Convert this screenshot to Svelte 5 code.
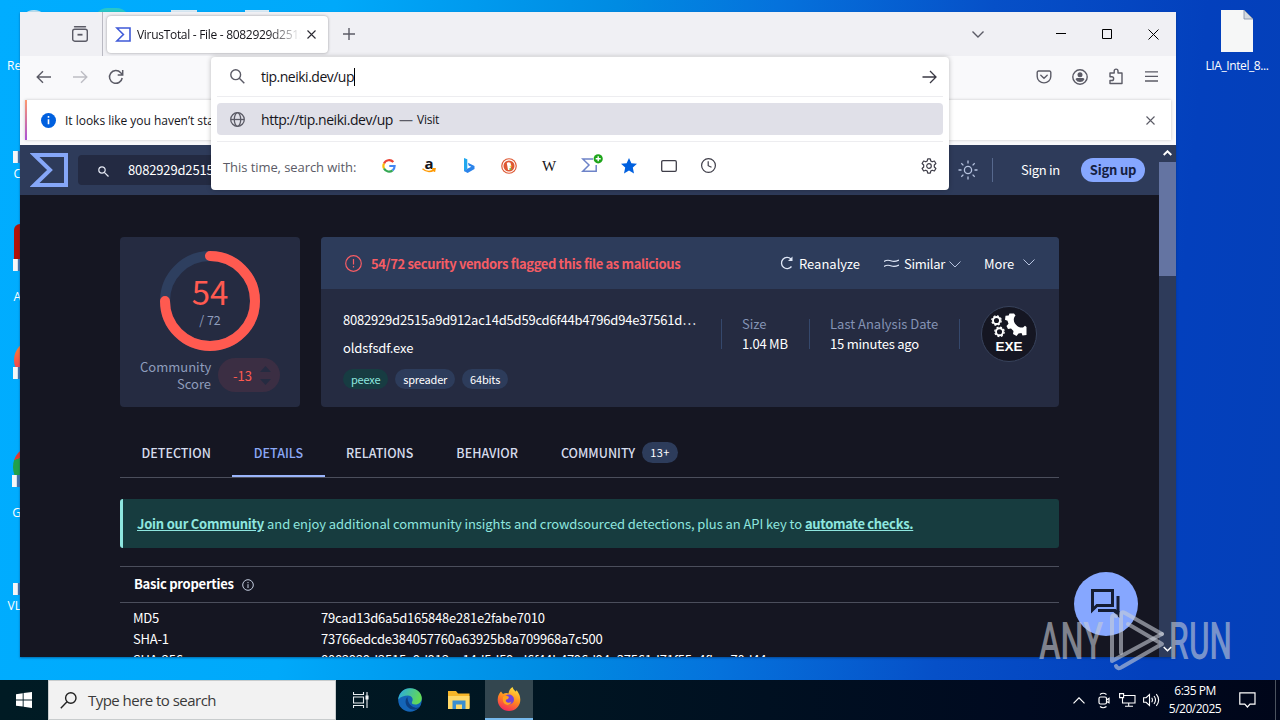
<script>
  const shortcuts = [
    { label: 'Re', kind: 'bin', top: 10, labelTop: 59, arrow: false },
    { label: 'C', kind: 'plain', top: 116, labelTop: 167, arrow: true },
    { label: 'A', kind: 'acrobat', top: 224, labelTop: 290, arrow: true },
    { label: '', kind: 'fox', top: 341, labelTop: 390, arrow: true },
    { label: 'G', kind: 'chrome', top: 447, labelTop: 506, arrow: true },
    { label: 'VL', kind: 'plain', top: 548, labelTop: 599, arrow: true }
  ];

  const tabs = ['DETECTION', 'DETAILS', 'RELATIONS', 'BEHAVIOR', 'COMMUNITY'];
  let active = 'DETAILS';

  const tags = ['peexe', 'spreader', '64bits'];

  const properties = [
    { name: 'MD5', value: '79cad13d6a5d165848e281e2fabe7010' },
    { name: 'SHA-1', value: '73766edcde384057760a63925b8a709968a7c500' },
    { name: 'SHA-256', value: '8082929d2515a9d912ac14d5d59cd6f44b4796d94e37561d71f55c4fbec70d44' }
  ];

  let query = 'tip.neiki.dev/up';
</script>

<div class="desktop">
  <div class="workspace">
    {#each shortcuts as s}
      <div class="shortcut {s.kind}" style="top: {s.top}px">
        {#if s.arrow}<span class="arrow"></span>{/if}
      </div>
      <span class="shortcut-label" style="top: {s.labelTop}px">{s.label}</span>
    {/each}
    <span class="peek round"></span>
    <span class="peek sheet"></span>
    <span class="peek sheet second"></span>

    <div class="file">
      <svg width="32" height="42" viewBox="0 0 32 42">
        <path d="M0 0h23l9 9v33H0z" fill="#f6f7f7" />
        <path d="M23 0v9h9z" fill="#d5dae0" stroke="#7d8ba3" stroke-width=".8" />
      </svg>
      <span>LIA_Intel_8...</span>
    </div>

    <div class="window">
      <div class="tabstrip">
        <div class="view-button">
          <svg width="18" height="18" viewBox="0 0 18 18" fill="none" stroke="#5b5b66" stroke-width="1.4">
            <path d="M3.5 1.7h11" stroke-linecap="round" />
            <rect x="1.7" y="4.2" width="14.6" height="12" rx="2" />
            <path d="M6.500 9.700h5" stroke-width="1.8" />
          </svg>
        </div>
        <div class="tab">
          <svg width="16" height="15" viewBox="0 0 16 15" fill="none" stroke="#3f5ad8" stroke-width="1.6">
            <path d="M1.800 1h13.200v13H1.800l6.600-6.500z" />
          </svg>
          <span class="tab-title">VirusTotal - File - 8082929d2515a</span>
          <svg class="tab-close" width="9" height="9" viewBox="0 0 9 9" stroke="#2b2a33" stroke-width="1.1">
            <path d="M.5.5l8 8M8.500.5l-8 8" />
          </svg>
        </div>
        <svg class="new-tab" width="12" height="12" viewBox="0 0 12 12" stroke="#5b5b66" stroke-width="1.4">
          <path d="M6 0v12M0 6h12" />
        </svg>
        <div class="captions">
          <svg width="12" height="7" viewBox="0 0 12 7" fill="none" stroke="#5b5b66" stroke-width="1.4"><path d="M.5.5L6 6 11.500.5" /></svg>
          <svg width="10" height="10" viewBox="0 0 10 10" stroke="#000"><path d="M0 4.500h10" /></svg>
          <svg width="10" height="10" viewBox="0 0 10 10" fill="none" stroke="#000"><path d="M.5.5h9v9h-9z" /></svg>
          <svg width="11" height="11" viewBox="0 0 11 11" stroke="#000"><path d="M.5.5l10 10M10.500.5l-10 10" /></svg>
        </div>
      </div>

      <div class="navbar">
        <svg width="16" height="14" viewBox="0 0 16 14" fill="none" stroke="#5b5b66" stroke-width="1.4"><path d="M15 7H1.500M7 1.200L1.200 7 7 12.800" /></svg>
        <svg width="16" height="14" viewBox="0 0 16 14" fill="none" stroke="#bdbdc4" stroke-width="1.4"><path d="M1 7h13.500M9 1.200L14.800 7 9 12.800" /></svg>
        <svg width="16" height="16" viewBox="0 0 16 16" fill="none" stroke="#5b5b66" stroke-width="1.5"><path d="M14.200 9A6.400 6.400 0 1 1 12.700 3.700L14.500 5.500M14.700 1v5H9.700" /></svg>
        <div class="tools">
          <svg width="16" height="16" viewBox="0 0 16 16" fill="none" stroke="#5b5b66" stroke-width="1.4" stroke-linecap="round"><path d="M2.500 2h11a1.300 1.300 0 0 1 1.300 1.300V7.500a6.800 6.400 0 0 1-13.600 0V3.300A1.300 1.300 0 0 1 2.500 2zM4.800 6.300L8 9.300l3.200-3" /></svg>
          <svg width="16" height="16" viewBox="0 0 16 16"><circle cx="8" cy="8" r="7.200" fill="none" stroke="#5b5b66" stroke-width="1.4" /><circle cx="8" cy="5.800" r="2.500" fill="#5b5b66" /><path d="M3.600 10.500Q3.600 9 5 9h6q1.400 0 1.400 1.500Q11 13 8 13t-4.400-2.500z" fill="#5b5b66" /></svg>
          <svg width="16" height="17" viewBox="0 0 16 17" fill="none" stroke="#5b5b66" stroke-width="1.4" stroke-linejoin="round"><path d="M2 5h4.200V3a1.900 1.900 0 0 1 3.800 0v2h4v10.500H2v-3h1.800a1.600 1.600 0 0 0 0-3.700H2z" /></svg>
          <svg width="13" height="11" viewBox="0 0 13 11" stroke="#5b5b66" stroke-width="1.3"><path d="M0 .8h13M0 5.400h13M0 10h13" /></svg>
        </div>
      </div>

      <div class="notice">
        <div class="notice-card">
          <svg width="15" height="15" viewBox="0 0 15 15"><circle cx="7.500" cy="7.500" r="7.500" fill="#0060df" /><path d="M7.500 6.300v5M7.500 3v1.800" stroke="#fff" stroke-width="1.600" /></svg>
          <span class="notice-text">It looks like you haven’t started Firefox</span>
          <svg class="dismiss" width="9" height="9" viewBox="0 0 9 9" stroke="#5b5b66" stroke-width="1.100"><path d="M.5.5l8 8M8.500.5l-8 8" /></svg>
        </div>
      </div>

      <div class="viewport">
        <div class="page">
          <header>
            <svg class="vt-logo" width="38" height="34" viewBox="0 0 38 34" fill="none" stroke="#86a7f8" stroke-width="4"><path d="M4.500 2H36v30H4.500L20 17z" /></svg>
            <div class="vt-search">
              <svg width="11" height="11" viewBox="0 0 11 11" fill="none" stroke="#e6eaf5" stroke-width="1.200"><circle cx="4" cy="4" r="3.200" /><path d="M6.300 6.300l4.200 4.200" /></svg>
              <span>8082929d2515a9d912ac</span>
            </div>
            <svg class="sun" width="20" height="20" viewBox="0 0 20 20" fill="none" stroke="#b6c3df" stroke-width="1.300">
              <circle cx="10" cy="10" r="3.600" />
              <path d="M10 .5v3M10 16.500v3M.5 10h3M16.500 10h3M3.300 3.300l2.100 2.100M14.600 14.600l2.100 2.100M3.300 16.700l2.100-2.100M14.600 5.400l2.100-2.100" />
            </svg>
            <span class="divider"></span>
            <a class="sign-in" href="#in">Sign in</a>
            <a class="sign-up" href="#up">Sign up</a>
          </header>

          <main>
            <section class="summary">
              <div class="score-card">
                <div class="ring">
                  <svg width="100" height="100" viewBox="0 0 100 100" fill="none" stroke-width="10">
                    <circle cx="50" cy="50" r="45" stroke="#2e3f5f" />
                    <path d="M50 5A45 45 0 1 1 5 50" stroke="#ff5a50" stroke-linecap="round" />
                  </svg>
                  <div class="ring-text">
                    <span class="hits">54</span>
                    <span class="total">/ 72</span>
                  </div>
                </div>
                <div class="community">
                  <span class="community-label">Community<br />Score</span>
                  <div class="votes">
                    <span>-13</span>
                    <svg width="11" height="19" viewBox="0 0 11 19" fill="#252b41"><path d="M0 6l5.500-6L11 6zM0 13h11l-5.500 6z" /></svg>
                  </div>
                </div>
              </div>

              <div class="file-card">
                <div class="file-head">
                  <svg width="17" height="17" viewBox="0 0 17 17" fill="none" stroke="#f65c64" stroke-width="1.200"><circle cx="8.500" cy="8.500" r="7.800" /><path d="M8.500 4v5.500M8.500 11v1.500" /></svg>
                  <strong>54/72 security vendors flagged this file as malicious</strong>
                  <div class="actions">
                    <svg width="13" height="14" viewBox="0 0 13 14" fill="none" stroke="#dfe7f7" stroke-width="1.300"><path d="M11.500 10.500A5.600 5.600 0 1 1 11 3" /><path d="M12.500.5v4.500H8z" fill="#dfe7f7" stroke="none" /></svg>
                    <span class="reanalyze">Reanalyze</span>
                    <svg class="waves" width="15" height="9" viewBox="0 0 15 9" fill="none" stroke="#dfe7f7" stroke-width="1.200"><path d="M0 2.500C3 .5 5 1 7.500 2S12 2.500 15 1M0 7.500C3 5.500 5 6 7.500 7s4.500.5 7.500-1" /></svg>
                    <span class="similar">Similar</span>
                    <svg class="caret" width="12" height="7" viewBox="0 0 12 7" fill="none" stroke="#b6c3df"><path d="M.5.5L6 6 11.500.5" /></svg>
                    <span class="more">More</span>
                    <svg class="caret wide" width="12" height="7" viewBox="0 0 12 7" fill="none" stroke="#b6c3df"><path d="M.5.5L6 6 11.500.5" /></svg>
                  </div>
                </div>
                <div class="file-body">
                  <div class="identity">
                    <div class="hash">8082929d2515a9d912ac14d5d59cd6f44b4796d94e37561d…</div>
                    <div class="name">oldsfsdf.exe</div>
                    <div class="tags">
                      {#each tags as tag}
                        <span class="tag {tag}">{tag}</span>
                      {/each}
                    </div>
                  </div>
                  <div class="fact size">
                    <span>Size</span>
                    <b>1.04 MB</b>
                  </div>
                  <div class="fact date">
                    <span>Last Analysis Date</span>
                    <b>15 minutes ago</b>
                  </div>
                  <div class="fact type"></div>
                  <div class="exe">
                    <svg width="36" height="26" viewBox="0 0 36 26" fill="none" stroke="#fff">
                      <circle cx="5.500" cy="7.500" r="3.500" stroke-width="1.900" />
                      <circle cx="5.500" cy="7.500" r="4.700" stroke-width="1.300" stroke-dasharray="2 1.690" />
                      <circle cx="8.500" cy="18.800" r="3.500" stroke-width="1.900" />
                      <circle cx="8.500" cy="18.800" r="4.700" stroke-width="1.300" stroke-dasharray="2 1.690" />
                      <path d="M18.500.5h4.500l1.500 2c-4.500 5 .5 12.500 7.500 12l2-1.800 1.500 1.300v8l-4 .5-1-2.500-3 .5-2 2.500-3.500-2 .5-3-2.500-2.500-3 .5-1.500-3 2-2.300-1-3-2.500-1 .5-4 3.200-.3z" fill="#fff" stroke="none" />
                    </svg>
                    <span>EXE</span>
                  </div>
                </div>
              </div>
            </section>

            <nav>
              {#each tabs as tab}
                <button class:active={tab === active} on:click={() => (active = tab)}>
                  <span class="tab-name">{tab}</span>
                  {#if tab === 'COMMUNITY'}<span class="badge">13+</span>{/if}
                </button>
              {/each}
            </nav>

            <div class="banner">
              <a class="join" href="#join">Join our Community</a>
              <span class="pitch">and enjoy additional community insights and crowdsourced detections, plus an API key to</span>
              <a class="auto" href="#api">automate checks.</a>
            </div>

            <div class="properties">
              <div class="properties-head">
                <h2>Basic properties</h2>
                <svg width="12" height="12" viewBox="0 0 12 12" fill="none" stroke="#c5cee0"><circle cx="6" cy="6" r="5.300" /><path d="M6 5.200v3.800M6 3v1.200" /></svg>
              </div>
              {#each properties as p}
                <div class="row">
                  <span class="key">{p.name}</span>
                  <span class="value">{p.value}</span>
                </div>
              {/each}
            </div>
          </main>

          <div class="chat">
            <svg width="30" height="30" viewBox="0 0 30 30" fill="none" stroke="#151d33" stroke-width="3"><path d="M1.500 21V1.500h20v15H6z" /><path d="M27 7v18l-3-3.500H7" /><path d="M28.500 22v7l-6-6z" fill="#151d33" stroke="none" /></svg>
          </div>
        </div>
        <div class="scrollbar">
          <svg width="9" height="6" viewBox="0 0 9 6" fill="none" stroke="#fff" stroke-width="2"><path d="M.7 5L4.500 1.300 8.300 5" /></svg>
          <div class="thumb"></div>
          <svg width="9" height="6" viewBox="0 0 9 6" fill="none" stroke="#fff" stroke-width="1.600"><path d="M.7 1L4.500 4.700 8.300 1" /></svg>
        </div>
      </div>

      <div class="urlbar">
        <div class="url-row">
          <svg width="15" height="15" viewBox="0 0 15 15" fill="none" stroke="#5b5b66" stroke-width="1.400"><circle cx="5.700" cy="5.700" r="4.900" /><path d="M9.300 9.300l5 5" /></svg>
          <span class="typed">{query}</span><i class="cursor"></i>
          <svg class="go" width="15" height="14" viewBox="0 0 15 14" fill="none" stroke="#3a3944" stroke-width="1.300"><path d="M.5 7H14M8 1l6 6-6 6" /></svg>
        </div>
        <div class="suggestion">
          <svg width="15" height="15" viewBox="0 0 15 15" fill="none" stroke="#5b5b66" stroke-width="1.300"><circle cx="7.500" cy="7.500" r="6.800" /><ellipse cx="7.500" cy="7.500" rx="3.200" ry="6.800" /><path d="M1 7.500h13" /></svg>
          <span class="address">http://{query}</span>
          <span class="dash">—</span>
          <span class="visit">Visit</span>
        </div>
        <div class="engines">
          <span class="engines-label">This time, search with:</span>
          <div class="engine">
            <svg width="14" height="14" viewBox="0 0 14 14" fill="none" stroke-width="2.200"><path d="M11.300 3A5.600 5.600 0 0 0 2 4.500" stroke="#ea4335" /><path d="M2 4.500a5.600 5.600 0 0 0 0 5" stroke="#fbbc05" /><path d="M2 9.500A5.600 5.600 0 0 0 10.600 11.300" stroke="#34a853" /><path d="M10.600 11.300A5.600 5.600 0 0 0 12.600 7H7.300" stroke="#4285f4" /></svg>
          </div>
          <div class="engine amazon">
            <span>a</span>
            <svg width="14" height="5" viewBox="0 0 14 5" fill="none" stroke="#f90" stroke-width="1.500"><path d="M.5.8Q6 5.500 12 2M10 .8l3 0-.6 3" /></svg>
          </div>
          <div class="engine">
            <svg width="11" height="16" viewBox="0 0 11 16"><path d="M0 0l3.300 1.300v9.500L0 13.500z" fill="#21a8ee" /><path d="M0 13l3.300-2.200 4-2L4.600 7.500 4 4.800l6.500 3.200v3L3.600 15z" fill="#2b83ea" /></svg>
          </div>
          <div class="engine">
            <svg width="16" height="16" viewBox="0 0 16 16"><circle cx="8" cy="8" r="7.800" fill="#de5833" /><circle cx="8" cy="8" r="6.100" fill="none" stroke="#fff" stroke-width="1.100" /><path d="M5.800 5Q7.500 3.500 9.500 4.800L10.200 8 9 12H7z" fill="#fff" /><path d="M8.200 8l3-.6-1.300 1.600z" fill="#fdd20a" /><path d="M8.300 10.300h2.200v1.500H8.300z" fill="#65bc46" /></svg>
          </div>
          <div class="engine wiki">W</div>
          <div class="engine vt">
            <svg width="22" height="20" viewBox="0 0 22 20" fill="none"><path d="M12 5H1.800L8 11 1.800 17.200H15.200V11" stroke="#6d83c8" stroke-width="1.500" /><circle cx="17.200" cy="4.800" r="4.600" fill="#1ea51a" /><path d="M17.200 2.300v5M14.700 4.800h5" stroke="#fff" stroke-width="1.400" /></svg>
          </div>
          <div class="engine">
            <svg width="16" height="16" viewBox="0 0 16 16"><path d="M8 0l2.400 5.200 5.600.6-4.200 3.800L13 15.500 8 12.600 3 15.500l1.200-5.900L0 5.800l5.600-.6z" fill="#0060df" /></svg>
          </div>
          <div class="engine">
            <svg width="16" height="12" viewBox="0 0 16 12" fill="none" stroke="#3f3e49" stroke-width="1.300"><rect x=".7" y=".7" width="14.600" height="10.600" rx="1.200" /></svg>
          </div>
          <div class="engine">
            <svg width="16" height="16" viewBox="0 0 16 16" fill="none" stroke="#3f3e49" stroke-width="1.200"><circle cx="7.500" cy="7.500" r="6.900" /><path d="M7.200 3.200v4.500l3.300 1.600" /></svg>
          </div>
          <svg class="gear" width="16" height="16" viewBox="0 0 16 16" fill="none" stroke="#3f3e49" stroke-width="1.200" stroke-linejoin="round"><circle cx="8" cy="8" r="2.300" /><path d="M6.700.8h2.600l.5 2.200 1.400.8 2.200-.8 1.500 2.500-1.600 1.500v2l1.600 1.500-1.500 2.500-2.200-.8-1.400.8-.5 2.200H6.700L6.200 13l-1.400-.8-2.200.8-1.500-2.500L2.700 9V7L1.100 5.500 2.600 3l2.200.8L6.200 3z" /></svg>
        </div>
      </div>
    </div>
  </div>

  <div class="taskbar">
    <div class="start">
      <svg width="16" height="16" viewBox="0 0 16 16" fill="#fff"><path d="M0 2.200l6.700-.9v6.200H0zM7.600 1.100L16 0v7.500H7.600zM0 8.400h6.700v6.200L0 13.700zM7.600 8.400H16V16l-8.400-1.200z" /></svg>
    </div>
    <div class="task-search">
      <svg width="17" height="17" viewBox="0 0 17 17" fill="none" stroke="#222" stroke-width="1.400"><circle cx="10.800" cy="6" r="5.200" /><path d="M7 9.800L.8 16.200" /></svg>
      <span>Type here to search</span>
    </div>
    <div class="task-app first">
      <svg width="16" height="16" viewBox="0 0 16 16" fill="none" stroke="#e8edf0" stroke-width="1.100"><path d="M.5 0v2.500h10V0M.5 16v-2.500h10V16M.5 5h10v6H.5zM14 0v16" /><path d="M13 4h2v3h-2z" fill="#fff" /></svg>
    </div>
    <div class="task-app">
      <svg width="24" height="24" viewBox="0 0 24 24">
        <defs>
          <linearGradient id="edgeTop" x1="0" y1="0" x2="1" y2=".3"><stop offset="0" stop-color="#28a9e6" /><stop offset="1" stop-color="#62d957" /></linearGradient>
        </defs>
        <circle cx="12" cy="12" r="11.800" fill="#1465b8" />
        <path d="M.3 11.500C1 4.500 6 .2 12 .2c7 0 11.800 5 11.800 9.800 0 4-3 6.500-6.500 6.500-3 0-4-1.300-3.300-2.500 2-3.500-.5-6.500-4-6.500-4 0-7 1-9.700 4z" fill="url(#edgeTop)" />
        <path d="M9.500 9C6 12 7 20 14.500 21.500c3 .5 5.500-.5 7.500-2.500-2.500 1-5.500 1-8-.8C10.500 15.800 9.500 12 9.500 9z" fill="#0c3f82" />
      </svg>
    </div>
    <div class="task-app folder">
      <svg width="22" height="20" viewBox="0 0 22 20"><path d="M0 1h8l2 2.500h11.500V18H0z" fill="#f6b629" /><path d="M0 6h21.500v13H0z" fill="#ffd969" /><path d="M4.500 19v-8.500h13V19H14v-4.500H8V19z" fill="#3b8ed0" /></svg>
    </div>
    <div class="task-app running">
      <svg width="24" height="24" viewBox="0 0 24 24">
        <defs>
          <linearGradient id="flame" x1=".7" y1="0" x2=".3" y2="1"><stop offset="0" stop-color="#ffe03d" /><stop offset=".5" stop-color="#ff8a1e" /><stop offset="1" stop-color="#f5255e" /></linearGradient>
        </defs>
        <path d="M4 4.500L6 7q1.500-1 3.500-1l2 .5Q12 2 15.500 0q.5 2.500 3 4.500 1-.5 1-1.500 4 5 3.800 10A11.300 11 0 0 1 .7 13Q.5 8 4 4.500z" fill="url(#flame)" />
        <circle cx="12" cy="12.500" r="5" fill="#7442d8" />
        <path d="M6 10q3-2.500 6 0l-1 2q-3 .5-2 2.500 2.500 2.500 5.500 0Q13 19 9 17.500T6 10z" fill="#ffa21e" />
      </svg>
    </div>
    <div class="tray">
      <svg class="up" width="12" height="7" viewBox="0 0 12 7" fill="none" stroke="#fff" stroke-width="1.200"><path d="M.5 6.300L6 .8l5.500 5.500" /></svg>
      <svg class="cam" width="12" height="17" viewBox="0 0 12 17" fill="none" stroke="#fff" stroke-width="1.200"><rect x="1" y="5" width="7.500" height="7" rx="1.500" /><path d="M8.500 8l2.500-1.700v4.500L8.500 9.500M2 2.500Q5 0 8.500 2.500M2 14.500q3 2.500 6.500 0" /></svg>
      <svg class="net" width="17" height="14" viewBox="0 0 17 14" fill="none" stroke="#fff" stroke-width="1.100"><path d="M5 2.500h11v7.500H3.500V5M9.700 10v3M6 13.300h8M.6.6h4v4h-4z" /></svg>
      <svg class="vol" width="17" height="14" viewBox="0 0 17 14" fill="none" stroke="#fff" stroke-width="1.100"><path d="M.6 4.700h2.500L6.500 1.500v11L3.100 9.300H.6zM8.700 4.800q1.500 2.200 0 4.400M11 3q3 4 0 8M13.300 1.200q4.700 5.800 0 11.600" /></svg>
      <div class="clock"><span class="time">6:35 PM</span><span class="day">5/20/2025</span></div>
      <svg class="action" width="17" height="17" viewBox="0 0 17 17" fill="none" stroke="#fff" stroke-width="1.200"><path d="M.8.8h15.200v11.400H11L8.400 15l-2.600-2.800h-5z" /></svg>
      <span class="peek-line"></span>
    </div>
  </div>

  <svg class="watermark" width="194" height="64" viewBox="0 0 194 64">
    <text x="1" y="50" font-size="52" textLength="64" lengthAdjust="spacingAndGlyphs">ANY</text>
    <text x="131" y="50" font-size="52" textLength="63" lengthAdjust="spacingAndGlyphs">RUN</text>
    <g fill="none" stroke-width="4" stroke-linejoin="round" stroke-linecap="round">
      <path d="M83 44V6q0-4 4-2l37 21" />
      <path d="M78 7q-4-2-4 2v43l50-27" />
      <path d="M90 15l34 20L84 58q-4 3-6-1" />
    </g>
  </svg>
</div>

<style>
  :global(body) {
    margin: 0;
    overflow: hidden;
  }

  .desktop {
    position: relative;
    width: 1280px;
    height: 720px;
    display: flex;
    flex-direction: column;
    overflow: hidden;
    background: linear-gradient(95deg, #00adff 0%, #00a9fa 25%, #008be2 46%, #0572dc 58%, #0650c8 74%, #0340bd 90%, #0440b8 100%);
    font-family: "Open Sans", "Noto Sans", sans-serif;
  }

  .desktop svg {
    flex: none;
  }

  .workspace {
    position: relative;
    flex: 1;
  }

  .shortcut {
    position: absolute;
    left: 14px;
    width: 36px;
    height: 47px;
  }

  .shortcut.bin {
    left: 20px;
    border-radius: 50%;
    background: #bfe0ef;
    width: 28px;
    height: 26px;
  }

  .shortcut.acrobat {
    border-radius: 6px;
    background: #b11208;
  }

  .shortcut.fox {
    height: 38px;
    border-radius: 50%;
    background: linear-gradient(#ff8a2a, #ec2c62);
  }

  .shortcut.chrome {
    left: 13px;
    height: 40px;
    border-radius: 50%;
    background: linear-gradient(160deg, #e33b2e 25%, #22a04a 26%);
  }

  .arrow {
    position: absolute;
    left: -1px;
    bottom: 0;
    width: 11px;
    height: 12px;
    background: linear-gradient(90deg, #f4f6f8 40%, #4673a9 45%);
  }

  .shortcut-label {
    position: absolute;
    left: 7px;
    width: 14px;
    text-align: right;
    color: #fff;
    font-size: 12px;
    line-height: 14px;
  }

  .peek {
    position: absolute;
    top: 8px;
    left: 95px;
    width: 34px;
    height: 12px;
    border-radius: 17px 17px 0 0;
    background: #29c6c9;
  }

  .peek.sheet {
    top: 10px;
    left: 171px;
    width: 26px;
    border-radius: 0;
    background: #dcecf5;
  }

  .peek.second {
    left: 245px;
    width: 24px;
  }

  .file {
    position: absolute;
    left: 1197px;
    top: 10px;
    width: 80px;
    display: flex;
    flex-direction: column;
    align-items: center;
    gap: 6px;
    color: #fff;
    font-size: 12px;
    line-height: 16px;
    letter-spacing: -0.4px;
  }

  .window {
    position: absolute;
    left: 20px;
    top: 12px;
    width: 1156px;
    height: 645px;
    display: flex;
    flex-direction: column;
    background: #f9f9fb;
    box-shadow: 0 1px 2px rgba(0, 40, 90, 0.5);
  }

  .tabstrip {
    display: flex;
    align-items: center;
    height: 44px;
    background: #f0f0f4;
  }

  .view-button {
    box-sizing: border-box;
    width: 83px;
    height: 44px;
    display: flex;
    align-items: center;
    padding-left: 51px;
    border-right: 1px solid #b9b9c2;
  }

  .tab {
    box-sizing: border-box;
    display: flex;
    align-items: center;
    width: 221px;
    height: 37px;
    margin-left: 4px;
    padding: 0 12px 0 8px;
    border-radius: 4px;
    background: #fff;
    box-shadow: 0 0 3px rgba(0, 0, 0, 0.35);
  }

  .tab-title {
    flex: 1;
    margin: 0 6px 0 6px;
    overflow: hidden;
    white-space: nowrap;
    font-size: 12px;
    letter-spacing: -0.3px;
    color: #15141a;
    mask-image: linear-gradient(90deg, #000 80%, transparent);
  }

  .new-tab {
    margin-left: 15px;
  }

  .captions {
    display: flex;
    align-items: center;
    margin-left: auto;
    padding-right: 17px;
    gap: 36px;
  }

  .captions svg:first-child {
    margin-right: 36px;
  }

  .navbar {
    display: flex;
    align-items: center;
    height: 41px;
    padding: 0 18px 0 16px;
    gap: 20px;
  }

  .tools {
    display: flex;
    align-items: center;
    gap: 20px;
    margin-left: auto;
  }

  .tools svg:last-child {
    margin-left: 1px;
  }

  .notice {
    height: 48px;
    padding: 3px 5px 5px;
    box-sizing: border-box;
  }

  .notice-card {
    box-sizing: border-box;
    height: 40px;
    display: flex;
    align-items: center;
    padding: 0 16px 0 14px;
    gap: 9px;
    border-left: 2px solid;
    border-image: linear-gradient(#ff9a6c, #a84fd8) 1;
    background: #fff;
    box-shadow: 0 0 3px rgba(0, 0, 0, 0.2);
    font-size: 12px;
    color: #15141a;
  }

  .notice-text {
    letter-spacing: -0.02px;
    padding-top: 1px;
    width: 148px;
    overflow: hidden;
    white-space: nowrap;
  }

  .dismiss {
    margin-left: auto;
  }

  .viewport {
    flex: 1;
    min-height: 0;
    display: flex;
    overflow: hidden;
    font-family: "Noto Sans CJK SC", "Noto Sans", sans-serif;
  }

  .page {
    position: relative;
    width: 1139px;
    background: #151622;
    color: #fff;
    overflow: hidden;
  }

  header {
    display: flex;
    align-items: center;
    height: 50px;
    padding-left: 10px;
    background: #2e3b5a;
    font-size: 13px;
  }

  .vt-search {
    box-sizing: border-box;
    display: flex;
    align-items: center;
    gap: 19px;
    width: 850px;
    height: 30px;
    margin-left: 10px;
    padding-left: 20px;
    border-radius: 4px;
    background: #232a42;
  }

  .vt-search span {
    width: 83px;
    margin-top: -2px;
    overflow: hidden;
    letter-spacing: -0.15px;
  }

  .vt-search svg {
    margin-top: 2px;
  }

  .sun {
    margin-left: 30px;
  }

  .divider {
    width: 1px;
    height: 24px;
    margin: 0 28px 0 14px;
    background: #56688d;
  }

  .sign-in {
    width: 38px;
    margin-top: -2px;
    color: #fff;
    letter-spacing: -0.3px;
    text-decoration: none;
    white-space: nowrap;
  }

  .sign-up {
    width: 64px;
    height: 24px;
    margin-left: 22px;
    border-radius: 12px;
    background: #86a7ff;
    color: #15203f;
    font-weight: bold;
    letter-spacing: -0.2px;
    line-height: 24px;
    text-align: center;
    text-decoration: none;
  }

  main {
    width: 939px;
    margin: 42px 0 0 100px;
  }

  .summary {
    display: flex;
    gap: 21px;
    height: 170px;
  }

  .score-card {
    width: 180px;
    box-sizing: border-box;
    padding-top: 14px;
    display: flex;
    flex-direction: column;
    align-items: center;
    border-radius: 4px;
    background: #252b41;
  }

  .ring {
    position: relative;
    height: 100px;
  }

  .ring-text {
    position: absolute;
    inset: 0;
    display: flex;
    flex-direction: column;
    align-items: center;
  }

  .hits {
    margin-top: 21px;
    color: #ff5a50;
    font-size: 33px;
    line-height: 38px;
  }

  .total {
    color: #8f9dbc;
    font-size: 12.5px;
    line-height: 19px;
  }

  .community {
    display: flex;
    align-items: center;
    gap: 7px;
    margin-top: 7px;
  }

  .community-label {
    width: 71px;
    color: #8f9dbc;
    font-size: 13px;
    line-height: 17px;
    text-align: right;
  }

  .votes {
    box-sizing: border-box;
    display: flex;
    align-items: center;
    justify-content: space-between;
    width: 62px;
    height: 34px;
    padding: 0 9px 0 15px;
    border-radius: 17px;
    background: #3b2e43;
    color: #ff5a50;
    font-size: 13px;
  }

  .file-card {
    width: 738px;
    border-radius: 4px;
    background: #252b41;
    overflow: hidden;
  }

  .file-head {
    display: flex;
    align-items: center;
    height: 52px;
    padding: 0 24px 0 24px;
    background: #2d3c5b;
    font-size: 13px;
  }

  .file-head strong {
    margin: 1px 0 0 9px;
    color: #f65c64;
    letter-spacing: -0.36px;
    white-space: nowrap;
  }

  .actions {
    display: flex;
    align-items: center;
    margin-left: auto;
  }

  .reanalyze {
    width: 61px;
    margin: 1px 24px 0 6px;
  }

  .similar {
    width: 41px;
    margin: 1px 4px 0 5px;
    letter-spacing: -0.3px;
  }

  .more {
    width: 30px;
    margin: 1px 9px 0 23px;
    letter-spacing: -0.1px;
  }

  .caret {
    margin-top: 2px;
  }

  .caret.wide {
    margin-top: -1px;
  }

  .file-body {
    display: flex;
    height: 118px;
    font-size: 13px;
  }

  .identity {
    width: 378px;
    padding: 21px 0 0 22px;
  }

  .hash,
  .name {
    height: 20px;
    line-height: 20px;
    letter-spacing: -0.2px;
    white-space: nowrap;
  }

  .name {
    margin-top: 8px;
    letter-spacing: -0.1px;
  }

  .tags {
    display: flex;
    gap: 7px;
    margin-top: 11px;
  }

  .tag {
    box-sizing: border-box;
    height: 20px;
    padding: 0 8px;
    border-radius: 10px;
    background: #2d3c5b;
    font-size: 11px;
    letter-spacing: -0.2px;
    line-height: 20px;
  }

  .tag.peexe {
    background: #173c42;
    color: #8ee6df;
  }

  .fact {
    box-sizing: border-box;
    height: 30px;
    margin-top: 24px;
    padding-left: 21px;
    display: flex;
    flex-direction: column;
    white-space: nowrap;
    background: linear-gradient(#35486c, #35486c) 0 6px / 1px 30px no-repeat;
  }

  .fact {
    height: 42px;
  }

  .fact span,
  .fact b {
    line-height: 21px;
    font-weight: normal;
  }

  .fact b {
    margin-top: -1px;
    letter-spacing: -0.22px;
  }

  .fact span {
    color: #8493b4;
  }

  .size {
    width: 88px;
  }

  .date {
    width: 150px;
  }

  .type {
    width: 22px;
  }

  .exe {
    box-sizing: border-box;
    width: 56px;
    height: 56px;
    margin-top: 17px;
    display: flex;
    flex-direction: column;
    align-items: center;
    padding-top: 6px;
    border: 1px solid #38435c;
    border-radius: 50%;
    background: #151622;
    font: bold 13.5px/15px "Liberation Sans", sans-serif;
  }

  nav {
    display: flex;
    height: 48px;
    margin-top: 22px;
    border-bottom: 1px solid #4b4e5c;
  }

  nav button {
    box-sizing: border-box;
    display: flex;
    align-items: center;
    gap: 7px;
    height: 48px;
    padding: 2px 21.5px 0;
    border: 0;
    border-bottom: 2px solid transparent;
    background: none;
    color: #d5dcec;
    font: 500 12.5px/20px "Noto Sans CJK SC", sans-serif;
    cursor: pointer;
  }

  nav button.active {
    border-bottom-color: #9ab4fb;
    color: #8ba8f5;
  }

  .badge {
    padding: 0 8px;
    margin-top: -2px;
    border-radius: 11px;
    background: #2d3c5b;
    color: #fff;
    font-size: 11px;
    font-weight: normal;
    line-height: 21px;
    letter-spacing: 0.4px;
  }

  .banner {
    box-sizing: border-box;
    display: flex;
    align-items: center;
    gap: 3px;
    height: 49px;
    margin-top: 21px;
    padding-left: 14px;
    border-left: 3px solid #8ee6df;
    border-radius: 3px;
    background: #173c3f;
    color: #8ee6df;
    font-size: 13px;
    white-space: nowrap;
  }

  .banner a {
    color: #8ee6df;
    font-weight: bold;
  }

  .join {
    letter-spacing: -0.22px;
  }

  .pitch {
    letter-spacing: -0.08px;
  }

  .auto {
    letter-spacing: -0.3px;
  }

  .properties {
    margin-top: 18px;
    border-top: 1px solid #4b4e5c;
  }

  .properties-head {
    display: flex;
    align-items: center;
    gap: 8px;
    height: 35px;
    padding-left: 14px;
    margin-bottom: 4px;
    border-bottom: 1px solid #4b4e5c;
  }

  h2 {
    margin: -2px 0 0;
    font-size: 13px;
    line-height: 20px;
    letter-spacing: -0.25px;
  }

  .row {
    display: flex;
    height: 21px;
    padding-left: 13px;
    font-size: 13px;
    line-height: 21px;
    letter-spacing: -0.21px;
  }

  .key {
    width: 188px;
  }

  .chat {
    position: absolute;
    left: 1054px;
    top: 427px;
    width: 64px;
    height: 64px;
    display: flex;
    align-items: center;
    justify-content: center;
    border-radius: 50%;
    background: #86a7ff;
  }

  .scrollbar {
    width: 17px;
    display: flex;
    flex-direction: column;
    align-items: center;
    padding: 5px 0 5px;
    background: #2e3b5a;
  }

  .thumb {
    width: 17px;
    height: 114px;
    margin: 6px 0 auto;
    background: #6474a2;
  }

  .urlbar {
    box-sizing: border-box;
    position: absolute;
    left: 191px;
    top: 45px;
    width: 738px;
    height: 133px;
    padding: 0 6px;
    border-radius: 4px;
    background: #fff;
    box-shadow: 0 0 5px rgba(0, 0, 0, 0.25);
    color: #15141a;
  }

  .url-row {
    display: flex;
    align-items: center;
    height: 39px;
    padding: 0 6px 0 13px;
    border-bottom: 1px solid #ededf0;
    font-size: 14px;
  }

  .typed {
    margin-left: 16px;
    letter-spacing: -0.5px;
  }

  .cursor {
    width: 1px;
    height: 18px;
    background: #000;
  }

  .go {
    margin-left: auto;
  }

  .suggestion {
    display: flex;
    align-items: center;
    height: 32px;
    margin: 6px 0;
    padding-left: 13px;
    border-radius: 4px;
    background: #e0e0e8;
    font-size: 14px;
  }

  .suggestion span {
    padding-top: 1px;
  }

  .address {
    margin-left: 16px;
    letter-spacing: -0.44px;
  }

  .dash {
    margin: 0 4px 0 6px;
    color: #5b5b66;
  }

  .visit {
    font-size: 12px;
    letter-spacing: -0.2px;
  }

  .engines {
    display: flex;
    align-items: center;
    height: 48px;
    padding: 0 6px;
    border-top: 1px solid #ededf0;
  }

  .engines-label {
    width: 146px;
    padding-top: 1px;
    color: #5b5b66;
    font-size: 13px;
    letter-spacing: -0.07px;
    white-space: nowrap;
  }

  .engine {
    width: 40px;
    display: flex;
    align-items: center;
    justify-content: center;
  }

  .amazon {
    flex-direction: column;
    font: bold 15px/9px "Open Sans", sans-serif;
  }

  .wiki {
    font: 15px/16px "Liberation Serif", serif;
  }

  .vt svg {
    margin: -4px 0 0 6px;
  }

  .gear {
    margin-left: auto;
  }

  .taskbar {
    display: flex;
    height: 40px;
    background: linear-gradient(90deg, #001b24, #001622 40%, #000a20 80%, #00061a);
    color: #fff;
  }

  .start {
    width: 48px;
    display: flex;
    align-items: center;
    justify-content: center;
  }

  .task-search {
    box-sizing: border-box;
    width: 288px;
    display: flex;
    align-items: center;
    gap: 11px;
    padding-left: 11px;
    border: 1px solid #c8cccd;
    background: #f2f2f2;
    color: #3a3a3a;
    font-size: 15px;
    letter-spacing: -0.53px;
  }

  .task-app {
    box-sizing: border-box;
    width: 50px;
    display: flex;
    align-items: center;
    justify-content: center;
  }

  .task-app.first {
    width: 49px;
  }

  .task-app.folder {
    padding-right: 2px;
  }

  .task-app.running {
    width: 48px;
    border-bottom: 2px solid #76b9ed;
    background: #33464f;
  }

  .tray {
    display: flex;
    align-items: center;
    margin-left: auto;
    padding-right: 4px;
  }

  .cam {
    margin-left: 13px;
  }

  .net {
    margin-left: 9px;
  }

  .vol {
    margin-left: 7px;
  }

  .clock {
    display: flex;
    flex-direction: column;
    align-items: center;
    width: 54px;
    margin: 0 17px 0 8px;
    font-size: 12px;
    line-height: 18px;
    letter-spacing: -0.5px;
    white-space: nowrap;
  }

  .peek-line {
    width: 1px;
    height: 40px;
    margin-left: 19px;
    background: #4b535f;
  }

  .watermark {
    position: absolute;
    left: 1038px;
    top: 609px;
    fill: rgba(200, 205, 215, 0.6);
    stroke: rgba(200, 205, 215, 0.6);
    stroke-width: 0;
    font-family: "Liberation Sans Narrow", "Roboto", sans-serif;
    font-weight: 500;
  }
</style>
